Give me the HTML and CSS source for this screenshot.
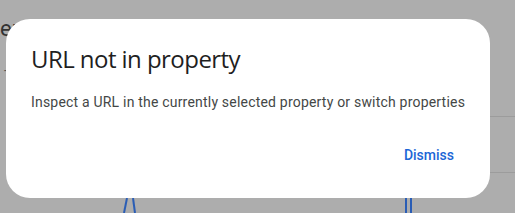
FILE: index.html
```html
<!DOCTYPE html>
<html>
<head>
<meta charset="utf-8">
<link rel="stylesheet" href="styles.css">
</head>
<body>
<div class="page">
  <div class="page-title">er</div>
  <div class="tick">-</div>
  <div class="rules">
    <div class="rule rule-1"></div>
    <div class="rule rule-2"></div>
  </div>
  <svg class="chart" width="515" height="213" viewBox="0 0 515 213">
    <path d="M124 213 L127 198" stroke="#2a5db5" stroke-width="2" fill="none"/>
    <path d="M133 198 L135 213" stroke="#2a5db5" stroke-width="2" fill="none"/>
    <path d="M406 198 L406 213" stroke="#2a5db5" stroke-width="2" fill="none"/>
    <path d="M411 198 L411 213" stroke="#2a5db5" stroke-width="2" fill="none"/>
  </svg>
</div>
<div class="dialog" role="dialog">
  <h2 class="dialog-title">URL not in property</h2>
  <p class="dialog-body">Inspect a URL in the currently selected property or switch properties</p>
  <div class="dialog-actions">
    <button class="btn-text">Dismiss</button>
  </div>
</div>
</body>
</html>
```
FILE: styles.css
```css
html, body {
  margin: 0;
  padding: 0;
  width: 515px;
  height: 213px;
  overflow: hidden;
}
body {
  background: #adadad;
  font-family: Roboto, "Open Sans", Arial, sans-serif;
  position: relative;
}
.page {
  position: absolute;
  inset: 0;
}
.page-title {
  position: absolute;
  left: 0;
  top: 16px;
  font-size: 22px;
  color: #333333;
}
.tick {
  position: absolute;
  left: 4px;
  top: 62px;
  font-size: 14px;
  color: #555;
}
.rule {
  position: absolute;
  left: 480px;
  right: 0;
  height: 1px;
  background: #9c9c9c;
}
.rule-1 { top: 116px; }
.rule-2 { top: 172px; }
.chart {
  position: absolute;
  left: 0;
  top: 0;
}
.dialog {
  position: absolute;
  left: 6px;
  top: 19px;
  width: 484px;
  height: 179px;
  box-sizing: border-box;
  background: #ffffff;
  border-radius: 24px;
  padding: 24px 24px 0 25px;
  display: flex;
  flex-direction: column;
}
.dialog-title {
  margin: 0;
  font-family: "Open Sans", Roboto, sans-serif;
  font-weight: 400;
  font-size: 24px;
  letter-spacing: -0.55px;
  line-height: 32px;
  color: #1f1f1f;
}
.dialog-body {
  margin: 17px -10px 0 0;
  white-space: nowrap;
  font-size: 14px;
  letter-spacing: 0.2px;
  line-height: 20px;
  color: #444746;
}
.dialog-actions {
  display: flex;
  justify-content: flex-end;
  margin-top: 33px;
}
.btn-text {
  border: none;
  background: none;
  padding: 0 12px;
  font-family: Roboto, sans-serif;
  font-size: 14px;
  font-weight: 500;
  line-height: 20px;
  color: #1b66d6;
  cursor: pointer;
}
```
